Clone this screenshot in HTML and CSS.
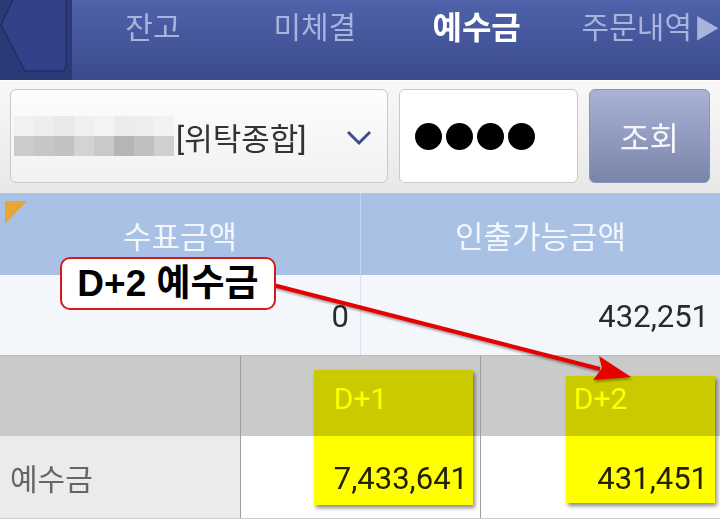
FILE: index.html
```html
<!DOCTYPE html>
<html lang="ko">
<head>
  <meta charset="UTF-8">
  <meta name="viewport" content="width=device-width, initial-scale=1">
  <title>예수금</title>
  <link rel="stylesheet" href="styles.css">
</head>
<body>
  <div class="screen">
    <div class="nav">
      <div class="back">
        <svg width="72" height="80" viewBox="0 0 72 80">
          <rect width="72" height="80" fill="#2c3977"/>
          <path d="M14 -2 L1 25 L25 71 L60 71 Q66 71 66 65 L66 -2 Z" fill="#33418a" stroke="#232e66" stroke-width="1.5"/>
        </svg>
      </div>
      <div class="tabs">
        <div class="tab">잔고</div>
        <div class="tab">미체결</div>
        <div class="tab active">예수금</div>
        <div class="tab more">주문내역<span class="tri">▶</span></div>
      </div>
    </div>

    <div class="search">
      <div class="account">
        <svg class="mosaic" width="160" height="42" viewBox="0 0 160 42">
          <rect x="0" y="0" width="20" height="20" fill="#f1f1f1"/>
          <rect x="20" y="0" width="20" height="20" fill="#eeeeee"/>
          <rect x="40" y="0" width="20" height="20" fill="#e9e9e9"/>
          <rect x="60" y="0" width="20" height="20" fill="#f0f0f0"/>
          <rect x="80" y="0" width="20" height="20" fill="#f3f3f3"/>
          <rect x="100" y="0" width="20" height="20" fill="#ececec"/>
          <rect x="120" y="0" width="20" height="20" fill="#eeeeee"/>
          <rect x="140" y="0" width="20" height="20" fill="#f2f2f2"/>
          <rect x="0" y="20" width="20" height="20" fill="#cbcbcb"/>
          <rect x="20" y="20" width="20" height="20" fill="#c6c6c6"/>
          <rect x="40" y="20" width="20" height="20" fill="#c2c2c2"/>
          <rect x="60" y="20" width="20" height="20" fill="#d3d3d3"/>
          <rect x="80" y="20" width="20" height="20" fill="#c9c9c9"/>
          <rect x="100" y="20" width="20" height="20" fill="#b5b5b5"/>
          <rect x="120" y="20" width="20" height="20" fill="#c0c0c0"/>
          <rect x="140" y="20" width="20" height="20" fill="#cfcfcf"/>
        </svg>
        <span class="acct-type">[위탁종합]</span>
        <svg class="chevron" width="28" height="18" viewBox="0 0 28 18">
          <path d="M3 3 L14 14 L25 3" fill="none" stroke="#3e4d8e" stroke-width="3"/>
        </svg>
      </div>
      <div class="password">
        <span class="dot"></span><span class="dot"></span><span class="dot"></span><span class="dot"></span>
      </div>
      <button class="query">조회</button>
    </div>

    <div class="summary">
      <div class="sum-head">
        <div class="cell corner">수표금액</div>
        <div class="cell">인출가능금액</div>
      </div>
      <div class="sum-row">
        <div class="cell num">0</div>
        <div class="cell num">432,251</div>
      </div>
    </div>

    <div class="deposit">
      <div class="dep-head">
        <div class="cell"></div>
        <div class="cell">D+1</div>
        <div class="cell">D+2</div>
      </div>
      <div class="dep-row">
        <div class="cell label">예수금</div>
        <div class="cell num">7,433,641</div>
        <div class="cell num">431,451</div>
      </div>
    </div>

    <!-- annotations drawn over the screenshot -->
    <div class="hl hl-d1"></div>
    <div class="hl hl-d2"></div>
    <svg class="arrow" width="720" height="519" viewBox="0 0 720 519">
      <line x1="273" y1="285" x2="600" y2="369" stroke="#e60000" stroke-width="4"/>
      <polygon points="631,377 599,356 602,368 593,380" fill="#e60000"/>
    </svg>
    <div class="callout">D+2 예수금</div>
  </div>
</body>
</html>
```

FILE: styles.css
```css
body {
  margin: 0;
  font-family: Roboto, "Noto Sans CJK KR", sans-serif;
  background: #fff;
}
.screen {
  position: relative;
  width: 720px;
  height: 519px;
  overflow: hidden;
}

/* top tabs */
.nav {
  display: flex;
  height: 80px;
  background: linear-gradient(#4f62aa, #3b4a8c);
  border-bottom: 1px solid #fff;
}
.back {
  width: 72px;
  height: 80px;
}
.back svg {
  display: block;
}
.tabs {
  flex: 1;
  display: grid;
  grid-template-columns: repeat(4, 1fr);
  overflow: hidden;
}
.tab {
  text-align: center;
  font-size: 30px;
  line-height: 36px;
  padding-top: 10px;
  color: #a9b4dc;
  white-space: nowrap;
}
.tab.active {
  color: #fff;
  font-weight: bold;
  font-size: 32px;
}
.tab.more {
  text-align: left;
  padding-left: 24px;
}
.tri {
  font-size: 26px;
  margin-left: 2px;
}

/* account / password / button */
.search {
  display: flex;
  gap: 11px;
  height: 94px;
  padding: 8px 10px 10px;
  background: linear-gradient(#f8f8f8, #e8e8e8);
}
.account {
  width: 378px;
  display: flex;
  align-items: center;
  box-sizing: border-box;
  padding-left: 3px;
  border: 1px solid #c9c9c9;
  border-radius: 6px;
  background: linear-gradient(#fdfdfd, #f1f1f1);
}
.mosaic {
  display: block;
  margin-top: 2px;
}
.acct-type {
  font-size: 31px;
  color: #333;
  margin-left: 2px;
}
.chevron {
  margin-left: 38px;
  margin-top: 4px;
}
.password {
  width: 179px;
  box-sizing: border-box;
  display: flex;
  align-items: center;
  gap: 4px;
  padding-left: 15px;
  border: 1px solid #c9c9c9;
  border-radius: 6px;
  background: #fff;
}
.dot {
  width: 27px;
  height: 27px;
  border-radius: 50%;
  background: #000;
}
.query {
  width: 121px;
  font-family: inherit;
  font-size: 32px;
  color: #f5f6fa;
  border: 1px solid #8b95b7;
  border-radius: 6px;
  background: linear-gradient(#a9b3d5, #7985aa);
}

/* upper table */
.sum-head, .sum-row {
  display: grid;
  grid-template-columns: 360px 360px;
}
.sum-head {
  height: 82px;
  background: #a9c1e4;
}
.sum-head .cell {
  display: flex;
  align-items: center;
  justify-content: center;
  font-size: 31px;
  color: #f3f6fc;
}
.sum-head .cell + .cell {
  border-left: 1px solid #c6d5ec;
}
.corner {
  position: relative;
}
.corner::before {
  content: "";
  position: absolute;
  left: 5px;
  top: 8px;
  border-top: 23px solid #e9a632;
  border-right: 22px solid transparent;
}
.sum-row {
  height: 80px;
  background: #f3f6fb;
  border-bottom: 1px solid #b9b9b9;
}
.sum-row .cell + .cell {
  border-left: 1px solid #dde3ee;
}
.num {
  display: flex;
  align-items: center;
  justify-content: flex-end;
  padding-right: 11px;
  padding-top: 3px;
  font-size: 31px;
  color: #2a2a2a;
}

/* lower table */
.dep-head, .dep-row {
  display: grid;
  grid-template-columns: 240px 240px 240px;
}
.dep-head {
  height: 80px;
  background: #cacaca;
}
.dep-head .cell {
  display: flex;
  align-items: center;
  justify-content: center;
  font-size: 30px;
  color: #fff;
  padding-top: 4px;
}
.dep-head .cell + .cell, .dep-row .cell + .cell {
  border-left: 1px solid #9c9c9c;
}
.dep-row {
  height: 82px;
  background: #fff;
  border-bottom: 1px solid #ccc;
}
.dep-row .num {
  padding-right: 12px;
  color: #222;
}
.label {
  display: flex;
  align-items: center;
  padding-left: 10px;
  font-size: 30px;
  color: #666;
  background: #ebebeb;
}

/* annotations */
.hl {
  position: absolute;
  background: #ffff00;
  mix-blend-mode: multiply;
  box-shadow: 2px 3px 4px rgba(0, 0, 0, 0.45);
}
.hl-d1 {
  left: 314px;
  top: 370px;
  width: 159px;
  height: 135px;
}
.hl-d2 {
  left: 566px;
  top: 376px;
  width: 149px;
  height: 127px;
}
.arrow {
  position: absolute;
  left: 0;
  top: 0;
  filter: drop-shadow(1px 2px 1px rgba(0, 0, 0, 0.35));
}
.callout {
  position: absolute;
  left: 60px;
  top: 257px;
  width: 212px;
  height: 49px;
  box-sizing: content-box;
  border: 2px solid #d61a1a;
  border-radius: 10px;
  background: #fff;
  font-family: "Liberation Sans", "Noto Sans CJK KR", sans-serif;
  font-weight: bold;
  font-size: 37px;
  line-height: 49px;
  text-align: center;
  color: #000;
}
```
